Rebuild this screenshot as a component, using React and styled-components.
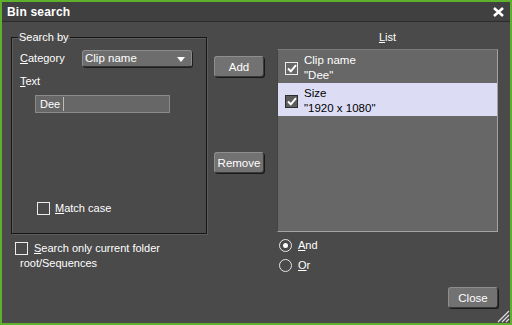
import React from 'react';
import styled, { createGlobalStyle } from 'styled-components';

const GlobalStyle = createGlobalStyle`
  html, body {
    margin: 0;
    padding: 0;
    background: #4a4a4a;
  }
  body {
    font-family: "Liberation Sans", Arial, sans-serif;
    font-size: 11px;
    color: #fff;
  }
`;

const Window = styled.div`
  position: relative;
  width: 512px;
  height: 325px;
  box-sizing: border-box;
  border: 2px solid #5fb02c;
  background: #4a4a4a;
  display: flex;
  flex-direction: column;
`;

const TitleBar = styled.div`
  height: 19px;
  border-bottom: 1px solid #2c2c2c;
  background: #404040;
  display: flex;
  align-items: center;
  justify-content: space-between;
  padding: 0 6px 0 5px;
`;

const Title = styled.span`
  font-weight: bold;
  font-size: 12px;
  letter-spacing: 0.2px;
`;

const Body = styled.div`
  flex: 1;
  display: flex;
  padding: 9px 12px 15px 9px;
  min-height: 0;
`;

const LeftCol = styled.div`
  width: 196px;
  display: flex;
  flex-direction: column;
`;

const MidCol = styled.div`
  width: 50px;
  margin-left: 7px;
  display: flex;
  flex-direction: column;
`;

const RightCol = styled.div`
  width: 221px;
  margin-left: 13px;
  display: flex;
  flex-direction: column;
`;

const Group = styled.fieldset`
  margin: 0;
  height: 203px;
  box-sizing: border-box;
  padding: 5px 8px 0 8px;
  border: 1px solid #161616;
  box-shadow: 1px 1px 0 #5c5c5c, inset 1px 1px 0 #5c5c5c;
  min-width: 0;
`;

const Legend = styled.legend`
  padding: 0 1px;
  margin-left: -2px;
  line-height: 13px;
  font-size: 11px;
`;

const GroupContent = styled.div`
  height: 184px;
  display: flex;
  flex-direction: column;
`;

const FieldRow = styled.div`
  display: flex;
  align-items: center;
  height: 18px;
`;

const Label = styled.span`
  line-height: 13px;
  width: ${(p) => p.$width || 'auto'};
  margin-top: ${(p) => p.$top || 0}px;
  u {
    text-decoration-thickness: 1px;
    text-underline-offset: 1px;
  }
`;

const Select = styled.div`
  position: relative;
  width: 110px;
  height: 17px;
  box-sizing: border-box;
  background: #6d6d6d;
  border: 1px solid #8c8c8c;
  border-bottom-color: #333;
  border-radius: 3px;
  box-shadow: 1px 1px 0 #1e1e1e;
  display: flex;
  align-items: center;
  padding-left: 2px;
  font-size: 11.5px;
`;

const Arrow = styled.span`
  position: absolute;
  right: 6px;
  top: 6px;
  width: 0;
  height: 0;
  border-left: 4px solid transparent;
  border-right: 4px solid transparent;
  border-top: 5px solid #fff;
`;

const TextInput = styled.div`
  margin: 7px 0 0 15px;
  width: 135px;
  height: 18px;
  box-sizing: border-box;
  background: #676767;
  border: 1px solid #8a8a8a;
  display: flex;
  align-items: center;
  padding-left: 4px;
`;

const Caret = styled.span`
  display: inline-block;
  width: 1px;
  height: 14px;
  margin-left: 3px;
  background: #bbb;
`;

const CheckRow = styled.label`
  display: flex;
  align-items: center;
  gap: ${(p) => p.$gap || 5}px;
  margin-left: ${(p) => p.$indent || 0}px;
  line-height: 15px;
  u {
    text-decoration-thickness: 1px;
    text-underline-offset: 1px;
  }
`;

const MatchRow = styled(CheckRow)`
  margin-top: auto;
  margin-bottom: 17px;
`;

const Box = styled.span`
  flex: none;
  width: 13px;
  height: 13px;
  box-sizing: border-box;
  border: 1.5px solid ${(p) => (p.$dark ? '#2e2e2e' : '#ececec')};
  background: ${(p) => (p.$dark ? '#5d5d5d' : 'transparent')};
  display: flex;
  align-items: center;
  justify-content: center;
`;

const FolderOption = styled.div`
  margin-top: 7px;
  padding-left: 4px;
`;

const SubLine = styled.div`
  padding-left: 5px;
  line-height: 15px;
`;

const Button = styled.button`
  width: 50px;
  height: 21px;
  margin-top: ${(p) => p.$top || 0}px;
  padding: 0;
  box-sizing: border-box;
  background: #727272;
  color: #fff;
  font-family: "Liberation Sans", Arial, sans-serif;
  font-size: 11.5px;
  border: 1px solid #8e8e8e;
  border-bottom-color: #3a3a3a;
  border-right-color: #3a3a3a;
  border-radius: 3px;
  box-shadow: 1px 1px 0 #1a1a1a;
`;

const ListLabel = styled.div`
  text-align: center;
  line-height: 13px;
  margin-bottom: 5px;
  u {
    text-decoration-thickness: 1px;
    text-underline-offset: 1px;
  }
`;

const ListBox = styled.div`
  height: 183px;
  box-sizing: border-box;
  background: #676767;
  border: 1px solid #a3a3a3;
  border-top-color: #7b7b7b;
  border-left-color: #434343;
`;

const Item = styled.div`
  display: flex;
  align-items: center;
  gap: 6px;
  padding: 3px 0 0 7px;
  height: 33px;
  box-sizing: border-box;
  background: ${(p) => (p.$selected ? '#dcdcf5' : 'transparent')};
  color: ${(p) => (p.$selected ? '#000' : '#fff')};
`;

const ItemText = styled.div`
  line-height: 15px;
  font-size: 11.5px;
`;

const Radios = styled.div`
  margin-top: 3px;
  display: flex;
  flex-direction: column;
`;

const RadioRow = styled.label`
  display: flex;
  align-items: center;
  gap: 6px;
  height: 20px;
  padding-left: 2px;
  u {
    text-decoration-thickness: 1px;
    text-underline-offset: 1px;
  }
`;

const RadioCircle = styled.span`
  width: 13px;
  height: 13px;
  box-sizing: border-box;
  border: 1.5px solid #e6e6e6;
  border-radius: 50%;
  display: flex;
  align-items: center;
  justify-content: center;
  &::after {
    content: '';
    display: ${(p) => (p.$on ? 'block' : 'none')};
    width: 5px;
    height: 5px;
    border-radius: 50%;
    background: #fff;
  }
`;

const Footer = styled.div`
  margin-top: auto;
  display: flex;
  justify-content: flex-end;
`;

const Grip = styled.svg`
  position: absolute;
  right: 0;
  bottom: 0;
`;

const Check = ({ color = '#fff' }) => (
  <svg width="10" height="9" viewBox="0 0 10 9">
    <path d="M1 4.5 L3.8 7.3 L9 1.2" fill="none" stroke={color} strokeWidth="2" />
  </svg>
);

const CloseX = () => (
  <svg width="11" height="10" viewBox="0 0 11 10">
    <path d="M1 1 L10 9 M10 1 L1 9" stroke="#fff" strokeWidth="2.6" />
  </svg>
);

const App = () => (
  <>
    <GlobalStyle />
    <Window>
      <TitleBar>
        <Title>Bin search</Title>
        <CloseX />
      </TitleBar>
      <Body>
        <LeftCol>
          <Group>
            <Legend>Search by</Legend>
            <GroupContent>
              <FieldRow>
                <Label $width="62px">
                  <u>C</u>ategory
                </Label>
                <Select>
                  Clip name
                  <Arrow />
                </Select>
              </FieldRow>
              <Label $top={8}>
                <u>T</u>ext
              </Label>
              <TextInput>
                Dee
                <Caret />
              </TextInput>
              <MatchRow $indent={17}>
                <Box />
                <span>
                  <u>M</u>atch case
                </span>
              </MatchRow>
            </GroupContent>
          </Group>
          <FolderOption>
            <CheckRow $gap={6}>
              <Box />
              <span>
                <u>S</u>earch only current folder
              </span>
            </CheckRow>
            <SubLine>root/Sequences</SubLine>
          </FolderOption>
        </LeftCol>
        <MidCol>
          <Button $top={25}>Add</Button>
          <Button $top={75}>Remove</Button>
        </MidCol>
        <RightCol>
          <ListLabel>
            <u>L</u>ist
          </ListLabel>
          <ListBox>
            <Item>
              <Box>
                <Check />
              </Box>
              <ItemText>
                Clip name
                <br />
                "Dee"
              </ItemText>
            </Item>
            <Item $selected>
              <Box $dark>
                <Check />
              </Box>
              <ItemText>
                Size
                <br />
                "1920 x 1080"
              </ItemText>
            </Item>
          </ListBox>
          <Radios>
            <RadioRow>
              <RadioCircle $on />
              <span>
                <u>A</u>nd
              </span>
            </RadioRow>
            <RadioRow>
              <RadioCircle />
              <span>
                <u>O</u>r
              </span>
            </RadioRow>
          </Radios>
          <Footer>
            <Button>Close</Button>
          </Footer>
        </RightCol>
      </Body>
      <Grip width="14" height="14" viewBox="0 0 14 14">
        <path d="M13 2 L2 13 M13 6 L6 13 M13 10 L10 13" stroke="#e0e0e0" strokeWidth="1.2" />
      </Grip>
    </Window>
  </>
);

export default App;
